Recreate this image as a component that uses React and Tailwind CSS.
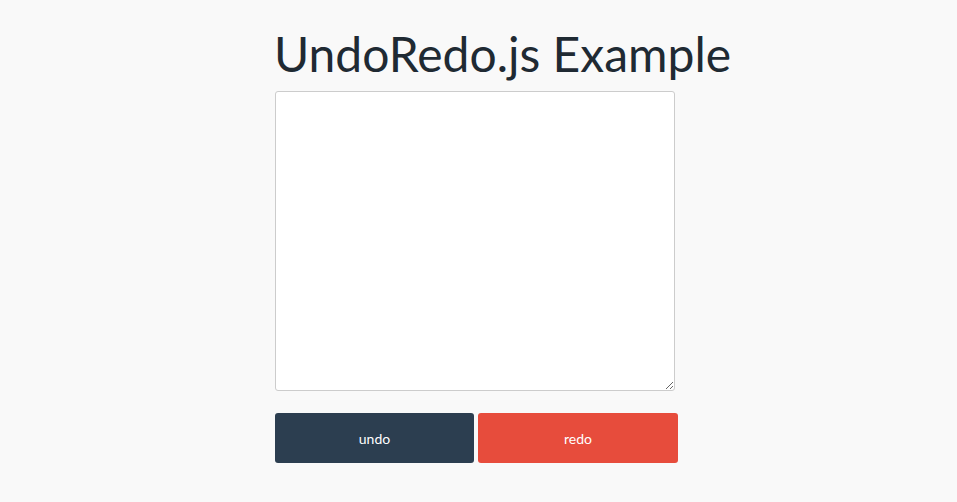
import { useState } from 'react'

export default function App() {
  const [text, setText] = useState('')

  return (
    <div className="min-h-[502px] bg-[#f9f9f9] font-['Lato','Liberation_Sans',sans-serif]">
      <div className="mx-auto w-[407px] pt-[24px]">
        <h1 className="whitespace-nowrap text-[48px] leading-[60px] text-[#1f2a33] -ml-[1px]">UndoRedo.js Example</h1>
        <textarea
          value={text}
          onChange={(e) => setText(e.target.value)}
          className="mt-[7px] block h-[300px] w-[400px] rounded-[3px] border border-[#cccccc] bg-white p-2 outline-none"
        />
        <div className="mt-[22px] flex gap-[4px]">
          <button className="h-[50px] w-[199px] rounded-[3px] bg-[#2c3e50] text-[14px] text-white">undo</button>
          <button className="h-[50px] w-[200px] rounded-[3px] bg-[#e74c3c] text-[14px] text-white">redo</button>
        </div>
      </div>
    </div>
  )
}
